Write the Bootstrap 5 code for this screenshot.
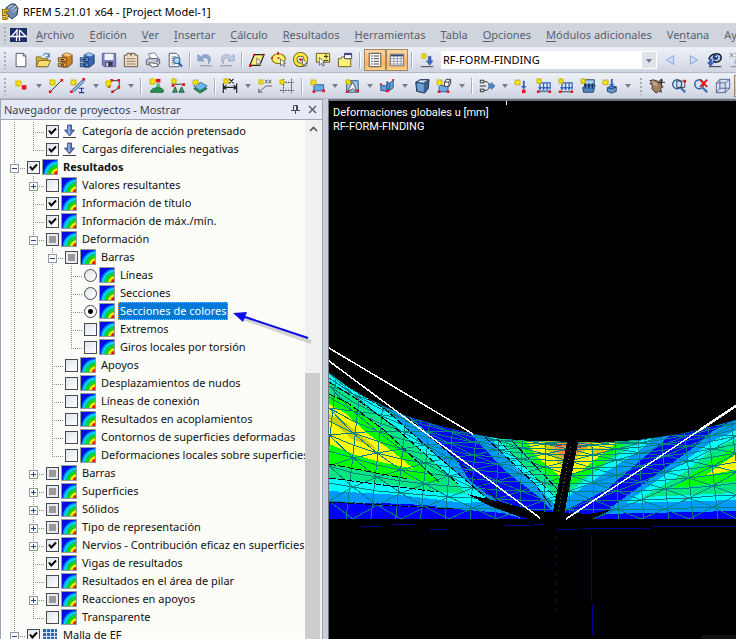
<!DOCTYPE html>
<html lang="es">
<head>
<meta charset="utf-8">
<meta name="viewport" content="width=device-width, initial-scale=1">
<title>RFEM 5.21.01 x64 - [Project Model-1]</title>
<link rel="stylesheet" href="https://cdn.jsdelivr.net/npm/bootstrap@5.3.0/dist/css/bootstrap.min.css">
<style>
body{font-family:"Noto Sans","Open Sans",sans-serif;font-size:11px;line-height:18px;color:#111;background:#fff}
button{font:inherit}
.titlebar{height:23px;font-size:11px;padding-left:2px;color:#000}
.menubar{height:24px;background:#d0d4dd;padding-left:4px;white-space:nowrap}
.menubar a{color:#5a6070;text-decoration:none;line-height:24px}
.menubar u{text-underline-offset:2px}
.menus{gap:15px;margin-left:9px;font-size:11px}
.toolstrip{height:26px;background:linear-gradient(#eef0f7,#dde1ec 60%,#cfd4e2);border-top:1px solid #e9ebf2;border-bottom:1px solid #b4b9c6;padding-left:4px;white-space:nowrap}
.grip{flex:none;width:6px;height:18px;background:radial-gradient(circle at 1px 1px,#a7adba 1px,transparent 1px) 0 1px/4px 4px repeat-y}
.grip-mid{width:12px;background-position:6px 1px}
.tool{flex:none;width:22px;height:22px;padding:0;border:1px solid transparent;background:none;display:flex;align-items:center;justify-content:center}
.tool svg{width:16px;height:16px}
.tool.on{background:linear-gradient(#fdd9a4,#fbb35b 70%,#fdd48e);border-color:#a08862}
.drop{flex:none;width:13px;height:22px;padding:0;border:0;background:none;display:flex;align-items:center;justify-content:center}
.drop::after{content:"";border:3px solid transparent;border-top:4px solid #777e8c;border-bottom:0}
.split{flex:none;width:8px;height:16px;background:linear-gradient(#a9aebb,#a9aebb) 3px 0/1px 100% no-repeat,linear-gradient(#fff,#fff) 4px 0/1px 100% no-repeat}
.casebox{flex:none;width:216px;height:18px;margin:0 3px;padding:0 2px;border:0;border-radius:0;color:#000;font-size:11px;line-height:18px;appearance:none;
 background:linear-gradient(#dfe2e9,#dfe2e9) right 1px center/14px 16px no-repeat #fff}
.casewrap{position:relative;flex:none}
.casewrap::after{content:"";position:absolute;right:8px;top:8px;border:3px solid transparent;border-top:4px solid #777e8c;border-bottom:0;pointer-events:none}
.workspace{min-height:0;background:#c9cedb}
.navpane{flex:none;width:323px;border:1px solid #9ea5b5;border-width:1px 1px 0 1px;background:#fcfcf8;margin-right:5px;position:relative;min-height:0}
.navhead{height:20px;background:#e6eaf6;border-bottom:1px solid #a0a6b4;color:#3c4350;padding:0 1px 0 3px}
.navhead button{border:0;background:none;padding:0;width:17px;height:18px;display:flex;align-items:center;justify-content:center}
.treebox{min-height:0;overflow:hidden;padding:2px 0 0 4px}
.treebox ul{list-style:none;margin:0;padding:0}
.treebox ul ul{margin-left:19px}
.treebox li{background:repeating-linear-gradient(#8a8a8a 0 1px,transparent 1px 2px) 9px 0/1px 100% no-repeat,repeating-linear-gradient(90deg,#8a8a8a 0 1px,transparent 1px 2px) 9px 10px/11px 1px no-repeat}
.treebox li.end{background-size:1px 10px,11px 1px}
.treebox li.through{background-size:1px 100%,0 0}
.node{height:18px;display:flex;align-items:center;white-space:nowrap}
.node::before{content:"";flex:none;width:22px}
.node:has(.fold)::before{display:none}
.fold{flex:none;width:9px;height:9px;margin:2px 8px 0 5px;padding:0;border:1px solid #8f98a8;background:linear-gradient(#27428c,#27428c) center/5px 1px no-repeat,#fff}
.fold.plus{background:linear-gradient(#27428c,#27428c) center/5px 1px no-repeat,linear-gradient(#27428c,#27428c) center/1px 5px no-repeat,#fff}
.node label{display:flex;align-items:center;height:18px}
.node input{appearance:none;flex:none;width:13px;height:13px;margin:0 2px 0 0;border:1px solid #454b55;background:linear-gradient(135deg,#dfe3ea,#fff)}
.node input[type=checkbox]:checked{background:url("data:image/svg+xml,%3Csvg xmlns='http://www.w3.org/2000/svg' viewBox='0 0 11 11'%3E%3Cpath d='M2 4.5 4.3 7.5 9 2.5' fill='none' stroke='%23000' stroke-width='2'/%3E%3C/svg%3E") center/11px no-repeat,linear-gradient(135deg,#dfe3ea,#fff)}
.node input.partial{background:linear-gradient(#999,#999) center/7px 7px no-repeat,#e9ebf0}
.node input[type=radio]{border-radius:50%}
.node input[type=radio]:checked{background:radial-gradient(circle,#000 2px,#fff 3px)}
.node svg{flex:none;width:16px;height:16px;margin-right:3px}
.node span{padding:0 2px}
.picked{background:#0078d7;color:#fff;outline:1px dotted #ff9a3d;outline-offset:-1px}
.scroller{flex:none;width:17px;background:#f0f0f0}
.scroller button{border:0;background:none;padding:0;height:18px;line-height:0}
.scroll-gap{flex:47}
.thumb{flex:53;background:#cdcdcd;width:15px}
.pointer{position:absolute;left:228px;top:207px;width:92px;height:40px;overflow:visible;pointer-events:none}
.scene{background:#000;border:1px solid #6e737d;border-width:2px 0 0 1px;position:relative;min-width:0;overflow:hidden}
.scene svg{position:absolute;inset:0;width:100%;height:100%}
.caption{position:relative;padding:5px 4px;color:#fff;font:11px/14px Roboto,Arial,sans-serif}
</style>
<script src="https://cdn.jsdelivr.net/npm/bootstrap@5.3.0/dist/js/bootstrap.bundle.min.js"></script>
</head>
<body class="vh-100 d-flex flex-column overflow-hidden">
<svg class="d-none">
 <defs>
 <symbol id="star" viewBox="0 0 8 8"><path d="M4 0v8M0 4h8M1 1l6 6M7 1 1 7" stroke="#b5a100" stroke-width="1.6"/><path d="M4 .5v7M.5 4h7M1.5 1.5l5 5M6.500 1.500l-5 5" stroke="#fff200" stroke-width="1"/></symbol>
 <symbol id="rainbow" viewBox="0 0 16 16"><path fill="#9a9a9a" d="M0 0h16v16H0z"/><svg x="1" y="1" width="14" height="14" viewBox="0 0 14 14"><path fill="#0010e0" d="M0 0h14v14H0z"/><circle cx="15" cy="15" r="14.500" fill="#0080ff"/><circle cx="15" cy="15" r="13" fill="#00d8f0"/><circle cx="15" cy="15" r="11" fill="#00a890"/><circle cx="15" cy="15" r="10.300" fill="#10d820"/><circle cx="15" cy="15" r="7.500" fill="#20a010"/><circle cx="15" cy="15" r="7" fill="#f8f000"/><circle cx="15" cy="15" r="4.800" fill="#ff9000"/><circle cx="15" cy="15" r="4" fill="#e81010"/></svg></symbol>
 <symbol id="load" viewBox="0 0 16 16"><path d="M6.500 2h4v5h3l-5 6-5-6h3z" fill="#5d78c0" stroke="#34477f" stroke-width=".8"/><path d="M8 3v8" stroke="#b9caf2" stroke-width="1.200"/><path d="M2 14.500h13" stroke="#444"/></symbol>
 <symbol id="meshfe" viewBox="0 0 16 16"><path fill="#2f63b8" d="M1 2h14v14H1z"/><path d="M4.500 2v14M8.500 2v14M12.500 2v14M1 5.500h14M1 9.500h14M1 13.500h14" stroke="#cfe3ff"/></symbol>
 <symbol id="arrow" viewBox="0 0 10 14"><path d="M1 1v11l3-3 2 4 2-1-2-4h3z" fill="#fff" stroke="#333"/></symbol>
 </defs>
</svg>

<header class="titlebar d-flex align-items-center flex-shrink-0">
 <svg width="17" height="17" viewBox="0 0 17 17" class="me-1"><path d="M4 5 9 1h4l3 4-1 7-5 4-6-5z" fill="#6f89ad" stroke="#2d3d58"/><path d="M6 5 11 2M9 7l5-4M11 9l4-3" stroke="#c9d6ea"/><path d="M6.500 7.500h-5v4c4-1.500 5 3.500 2 4-1.500.2-2.500-.2-3-1" fill="none" stroke="#5a4408" stroke-width="3"/><path d="M6.500 7.500h-5v4c4-1.500 5 3.500 2 4-1.500.2-2.500-.2-3-1" fill="none" stroke="#f0b71e" stroke-width="1.800"/></svg>
 <span>RFEM 5.21.01 x64 - [Project Model-1]</span>
</header>

<nav class="menubar d-flex align-items-center flex-shrink-0 overflow-hidden">
 <span class="grip"></span>
 <svg class="flex-shrink-0" width="17" height="14" viewBox="0 0 17 14"><path fill="#1d2c6b" d="M0 0h17v14H0z"/><path d="M0 8.500h17M2 8l5-6v6M9.500 2v11M9.500 2l6 6M6.500 8v5" stroke="#fff" fill="none" stroke-width="1.300"/></svg>
 <div class="menus d-flex">
 <a href="#"><u>A</u>rchivo</a><a href="#"><u>E</u>dición</a><a href="#"><u>V</u>er</a><a href="#"><u>I</u>nsertar</a><a href="#"><u>C</u>álculo</a><a href="#"><u>R</u>esultados</a><a href="#"><u>H</u>erramientas</a><a href="#"><u>T</u>abla</a><a href="#"><u>O</u>pciones</a><a href="#"><u>M</u>ódulos adicionales</a><a href="#">Ve<u>n</u>tana</a><a href="#">Ay<u>u</u>da</a>
 </div>
</nav>

<div class="toolstrip d-flex align-items-center flex-shrink-0 overflow-hidden" role="toolbar" aria-label="Estándar">
 <span class="grip"></span>
 <button class="tool" aria-label="Nuevo"><svg viewBox="0 0 18 18"><path d="M3.500 1.500h8l3 3v12h-11z" fill="#fff" stroke="#4a4f58"/><path d="M11.500 1.500v3h3" fill="none" stroke="#4a4f58"/></svg></button>
 <button class="tool" aria-label="Abrir"><svg viewBox="0 0 18 18"><path d="M1.500 5.500h5l1 2h7v9h-13z" fill="#d8b640" stroke="#7b6414"/><path d="m1.500 16.500 3-7h13l-3 7z" fill="#f7dc76" stroke="#7b6414"/><path d="M9 4c2-4 6-3 7 1M16 1v4.500h-4" fill="none" stroke="#4d7fb5" stroke-width="1.300"/></svg></button>
 <button class="tool" aria-label="Modelos"><svg viewBox="0 0 18 18"><path d="m6 3 5-2 6 2v10l-5 4H6z" fill="#c98526" stroke="#6d420c"/><path d="m6 3 6 2 5-2-6-2z" fill="#f4cd84"/><path d="M1.500 6.500h9v4h-9zM1.500 12.500h9v4h-9z" fill="#efb257" stroke="#6d420c"/><path d="M4 8.500h4M4 14.500h4" stroke="#333" stroke-width="1.500"/></svg></button>
 <button class="tool" aria-label="Proyectos"><svg viewBox="0 0 18 18"><path d="m6 3 5-2 6 2v10l-5 4H6z" fill="#3568b2" stroke="#1d3767"/><path d="m6 3 6 2 5-2-6-2z" fill="#a7c8ef"/><path d="M1.500 6.500h9v4h-9zM1.500 12.500h9v4h-9z" fill="#6a9edc" stroke="#1d3767"/><path d="M4 8.500h4M4 14.500h4" stroke="#123" stroke-width="1.500"/></svg></button>
 <button class="tool" aria-label="Guardar"><svg viewBox="0 0 18 18"><path d="M1.500 1.500h15v15h-13l-2-2z" fill="#8081c4" stroke="#55568f"/><path d="M4 2h10v7H4z" fill="#f3f3fb"/><path d="M5 11h8v5H5z" fill="#333a4c"/><path d="M6 12h2v4H6z" fill="#eee"/></svg></button>
 <button class="tool" aria-label="Informe"><svg viewBox="0 0 18 18"><path d="M1.500 3.500h3v-2h4v2h1v-2h4v2h3v13h-15z" fill="#ecdcc6" stroke="#5d4a35"/><path d="M4 7.500h10M4 10.500h10M4 13.500h10" stroke="#8f7759"/></svg></button>
 <button class="tool" aria-label="Imprimir"><svg viewBox="0 0 18 18"><path d="m4 2 7-1 4 6-8 2z" fill="#fff" stroke="#777"/><path d="m1.500 9 4-2 11 1v5l-5 3-10-2z" fill="#c5cad6" stroke="#525966"/><path d="m4 12 9 1 2 3-7 1z" fill="#fff" stroke="#555"/><circle cx="14" cy="10" r="1" fill="#3568d2"/></svg></button>
 <button class="tool" aria-label="Vista previa"><svg viewBox="0 0 18 18"><path d="M2.500 1.500h8l3 3v12h-11z" fill="#fff" stroke="#4a4f58"/><path d="M5 5.500h5M5 7.500h3M5 9.500h2M5 11.500h2M5 13.500h4" stroke="#777"/><circle cx="11" cy="9.500" r="3.500" fill="#aee0f8" stroke="#3a73b0" stroke-width="1.400"/><path d="m13.500 12.500 3.500 4" stroke="#24569a" stroke-width="2.200"/></svg></button>
 <span class="split"></span>
 <button class="tool" aria-label="Deshacer"><svg viewBox="0 0 18 18"><path d="M1 3v7h7L5.700 7.700C9 5 14 6.500 13 13c4.500-5 1.500-10.500-4-10-2.200.2-3.700 1.200-4.900 2.500z" fill="#8fa9cf" stroke="#6c83aa" stroke-width=".7"/><path d="M3 15.500h14" stroke="#888"/></svg></button>
 <button class="tool" aria-label="Rehacer"><svg viewBox="0 0 18 18"><path d="M17 3v7h-7l2.300-2.300C9 5 4 6.500 5 13 .5 8 3.500 2.500 9 3c2.200.2 3.700 1.200 4.900 2.500z" fill="#c3d0e4" stroke="#7b8ead" stroke-width=".7"/><path d="M1 15.500h14" stroke="#888"/></svg></button>
 <span class="split"></span>
 <button class="tool" aria-label="Selección romboide"><svg viewBox="0 0 18 18"><path d="M6 3h11l-5 12H1z" fill="#fdf07a" stroke="#222" stroke-width="1.300"/><path fill="#e01010" d="M5 2h2v2H5zM15 2h2v2h-2zM0 14h3v3H0z"/><use href="#arrow" x="8" y="6" width="7" height="10"/></svg></button>
 <button class="tool" aria-label="Selección elíptica"><svg viewBox="0 0 18 18"><ellipse cx="8.500" cy="7.500" rx="7.500" ry="5.500" fill="#fdf07a" stroke="#8f7500" stroke-width="1.300"/><path fill="#e01010" d="M0 6h2v2H0zM7 0h2v3H7zM7.500 6h2v2h-2z"/><use href="#arrow" x="10" y="7" width="7" height="10"/></svg></button>
 <button class="tool" aria-label="Selección anular"><svg viewBox="0 0 18 18"><circle cx="8.500" cy="8.500" r="6" fill="none" stroke="#5d4d00" stroke-width="5"/><circle cx="8.500" cy="8.500" r="6" fill="none" stroke="#fbe93d" stroke-width="3.300"/><circle cx="8.500" cy="8.500" r="1.500" fill="#e01010"/><use href="#arrow" x="10" y="7" width="7" height="10"/></svg></button>
 <button class="tool" aria-label="Selección especial"><svg viewBox="0 0 18 18"><path d="M1.500 1.500h15v10h-15z" fill="#fdf07a" stroke="#4f4a22"/><path d="M10 5h5M12.500 2.500v5M10 9.500h5" stroke="#222"/><use href="#arrow" x="4" y="5" width="8" height="12"/></svg></button>
 <button class="tool" aria-label="Nueva ventana"><svg viewBox="0 0 18 18"><path d="M1.500 7.500h3l1-2h4l1 2h5v9h-14z" fill="#fdf07a" stroke="#5f5522"/><path d="M8.500 1.500h8v6h-8z" fill="#fff" stroke="#353c6c"/><path d="M8.500 2.500h8" stroke="#353c8c" stroke-width="2"/></svg></button>
 <span class="split"></span>
 <button class="tool on" aria-label="Navegador"><svg viewBox="0 0 18 18"><path d="M2.500 1.500h13v15h-13z" fill="#fff" stroke="#393d44"/><path d="M4.500 4.500h2M4.500 7.500h2M4.500 10.500h2M4.500 13.500h2M7.500 4.500h6M7.500 7.500h6M7.500 10.500h6M7.500 13.500h6" stroke="#333"/></svg></button>
 <button class="tool on" aria-label="Tablas"><svg viewBox="0 0 18 18"><path d="M1.500 2.500h15v13h-15z" fill="#fff" stroke="#596481"/><path d="M2 4h14" stroke="#35466f" stroke-width="2"/><path d="M2 7.500h14M2 10.500h14M2 13.500h14M5.500 5v10M9.500 5v10M13.500 5v10" stroke="#8b93a4"/></svg></button>
 <span class="split"></span>
 <button class="tool" aria-label="Nuevo caso de carga"><svg viewBox="0 0 18 18"><use href="#star" x="2" y="1" width="7" height="7"/><path d="M10.500 5h3v5h2l-3.500 5-3.500-5h2z" fill="#3d68c8" stroke="#213f85" stroke-width=".6"/><path d="M2 16.500h14" stroke="#333"/></svg></button>
 <div class="casewrap"><select class="casebox" aria-label="Caso de carga"><option>RF-FORM-FINDING</option></select></div>
 <button class="tool" aria-label="Anterior"><svg viewBox="0 0 18 18"><path d="m4 9 8-5v10z" fill="#c8ddfa" stroke="#7f9fd2"/></svg></button>
 <button class="tool" aria-label="Siguiente"><svg viewBox="0 0 18 18"><path d="M14 9 6 4v10z" fill="#c8ddfa" stroke="#7f9fd2"/></svg></button>
 <button class="tool" aria-label="Mostrar cargas"><svg viewBox="0 0 18 18"><path d="M2 8c2-7 13-8 14-2 0 5-6 7-9 4" fill="#b9cdea" stroke="#18233c" stroke-width="1.700"/><circle cx="9.500" cy="6" r="3" fill="#1f3f80"/><circle cx="10.500" cy="5" r="1" fill="#fff"/><path d="M2.500 8h3v4h2L4 16 .5 12h2z" fill="#3d68c8" stroke="#213f85" stroke-width=".6"/><path d="M2 16.500h14" stroke="#222"/></svg></button>
 <button class="tool" aria-label="Valores"><svg viewBox="0 0 18 18"><path d="m1 1 4 5m0-5-4 5M7 1l4 5m0-5L7 6" stroke="#777"/><path d="M7 8h3v3h2l-3.500 4L5 11h2z" fill="#9db2d8"/><path d="M2 16.500h14" stroke="#777"/></svg></button>
</div>

<div class="toolstrip d-flex align-items-center flex-shrink-0 overflow-hidden" role="toolbar" aria-label="Insertar">
 <span class="grip"></span>
 <button class="tool" aria-label="Nudo"><svg viewBox="0 0 18 18"><use href="#star" x="2" y="2" width="8" height="8"/><path fill="#e01818" d="M10 8h5v5h-5z"/></svg></button>
 <button class="drop" aria-label="Más nudos"></button>
 <button class="tool" aria-label="Línea"><svg viewBox="0 0 18 18"><path d="M3 15 15 3" stroke="#222"/><path fill="#e01818" d="M1 14h3v3H1zM14 1h3v3h-3z"/><use href="#star" x="1" y="1" width="8" height="8"/></svg></button>
 <button class="tool" aria-label="Barra"><svg viewBox="0 0 18 18"><path d="M3 15 15 3" stroke="#456faa" stroke-width="3.500"/><path d="M3 15 15 3" stroke="#bcd8f8" stroke-width="1.300"/><path fill="#e01818" d="M0 14h3v3H0zM14 0h3v3h-3z"/><use href="#star" x="0" y="1" width="8" height="8"/><path d="M10 11.500h6M10 16.500h6M13 11v6" stroke="#203f8f" stroke-width="1.300"/></svg></button>
 <button class="drop" aria-label="Más barras"></button>
 <button class="tool" aria-label="Polilínea"><svg viewBox="0 0 18 18"><path d="M7 3h9v8l-7 4" fill="none" stroke="#222"/><path fill="#e01818" d="M6 1h3v3H6zM14 1h3v3h-3zM14 9h3v3h-3zM7 14h3v3H7zM3 8h3v3H3z"/><use href="#star" x="0" y="2" width="8" height="8"/></svg></button>
 <button class="drop" aria-label="Más líneas"></button>
 <span class="split"></span>
 <button class="tool" aria-label="Apoyo"><svg viewBox="0 0 18 18"><use href="#star" x="1" y="0" width="8" height="8"/><path fill="#e01818" d="M9 1h5v4H9z"/><path d="M10 6h3l1 5H9z" fill="#56b879"/><path d="M3 16c0-3 3-5 8-5s7 2 6 5z" fill="#28934f" stroke="#165a30"/></svg></button>
 <button class="tool" aria-label="Apoyo lineal"><svg viewBox="0 0 18 18"><path d="M2 7h14" stroke="#222"/><path fill="#e01818" d="M2 7h3v3H2zM14 6h3v3h-3z"/><use href="#star" x="1" y="0" width="7" height="7"/><path d="m6 10-3 6h5zM13 10l-3 6h6z" fill="#35a460" stroke="#165a30"/></svg></button>
 <button class="tool" aria-label="Apoyo superficial"><svg viewBox="0 0 18 18"><path d="m2 12 8-5 7 5-8 5z" fill="#28934f" stroke="#165a30"/><path d="m2 9 8-4 7 4-8 5z" fill="#6db6f0" stroke="#2b6fae"/><use href="#star" x="0" y="1" width="8" height="8"/></svg></button>
 <span class="split"></span>
 <button class="tool" aria-label="Cota"><svg viewBox="0 0 18 18"><path d="M1.500 6v11M16.500 6v11M2 10.500h14M5 8l-3 2.500L5 13M13 8l3 2.500-3 2.500M8 1l5 5m0-5L8 6" fill="none" stroke="#222" stroke-width="1.300"/><use href="#star" x="1" y="0" width="7" height="7"/></svg></button>
 <button class="drop" aria-label="Más cotas"></button>
 <button class="tool" aria-label="Comentario"><svg viewBox="0 0 18 18"><path d="M2 16 10 9h7M2 12v4h4M9 2l3 4m0-4L9 6M13 2l3 4m0-4-3 4" fill="none" stroke="#555"/><use href="#star" x="1" y="1" width="7" height="7"/></svg></button>
 <button class="tool" aria-label="Rejilla"><svg viewBox="0 0 18 18"><path d="M1 5h16M1 14h16M5 1v16M14 1v16" stroke="#333" stroke-dasharray="2 1"/><use href="#star" x="0" y="1" width="7" height="7"/></svg></button>
 <span class="split"></span>
 <button class="tool" aria-label="Superficie"><svg viewBox="0 0 18 18"><path d="M5.500 7.500h11v7h-11z" fill="#68aae2" stroke="#285a91"/><path fill="#e01818" d="M4 14h3v3H4zM15 13h3v3h-3z"/><use href="#star" x="1" y="1" width="8" height="8"/></svg></button>
 <button class="drop" aria-label="Más superficies"></button>
 <button class="tool" aria-label="Superficie curva"><svg viewBox="0 0 18 18"><path d="M3 3h13v13H3z" fill="#9bc4e8" stroke="#305078"/><path d="M5 15c0-4 4-6 4-11l3 5 2 6-4-3z" fill="#fff" stroke="#444"/><path fill="#e01818" d="M2 14h3v3H2zM14 13h3v3h-3z"/><use href="#star" x="1" y="1" width="7" height="7"/></svg></button>
 <button class="drop" aria-label="Más curvas"></button>
 <button class="tool" aria-label="Superficie alabeada"><svg viewBox="0 0 18 18"><path d="m2 8 7 1V4l3 2 4-4v9l-4 3-3-2v3l-7-1z" fill="#5c9fe0" stroke="#28527f"/><path d="M9 5v8M12 6v8" stroke="#28527f"/><path fill="#e01818" d="M1 6h2v2H1zM8 13h3v3H8zM15 1h2v2h-2z"/></svg></button>
 <button class="drop" aria-label="Más alabeadas"></button>
 <button class="tool" aria-label="Sólido"><svg viewBox="0 0 18 18"><path d="m2 5 5-3h10l-1 10-4 5-9-2z" fill="#3a6295" stroke="#172f50"/><path d="m2 5 9 1 6-4H7z" fill="#bfd9f5" stroke="#172f50"/><path d="m3 6 8 1v9l-7-2z" fill="#6e9fd4"/></svg></button>
 <button class="tool" aria-label="Sólido de superficies"><svg viewBox="0 0 18 18"><path d="M3.500 8.500h10v7h-10z" fill="#68aae2" stroke="#285a91"/><path d="M9.500 4.500h5v5h-5zM9.500 4.500l2-3h5v5l-2 3M14.500 4.500l2-3" fill="#eee" stroke="#333"/><path fill="#e01818" d="M2 14h3v3H2zM12 14h3v3h-3z"/><use href="#star" x="0" y="1" width="8" height="8"/></svg></button>
 <button class="drop" aria-label="Más sólidos"></button>
 <span class="split"></span>
 <button class="tool" aria-label="Conjunto"><svg viewBox="0 0 18 18"><path d="M1.500 2.500h4v3h-4zM1.500 12.500h4v3h-4zM6 4c3 0 5 1 6 4M6 14c3 0 5-1 6-4M1 9h7" fill="none" stroke="#222"/><path d="M11 7h3V5l4 4-4 4v-2h-3z" fill="#4c8ad0" stroke="#244b80" stroke-width=".6"/></svg></button>
 <button class="drop" aria-label="Más conjuntos"></button>
 <button class="tool" aria-label="Carga nodal"><svg viewBox="0 0 18 18"><use href="#star" x="0" y="1" width="8" height="8"/><path d="M10 3h2v6h2l-3 4-3-4h2z" fill="#315fc0"/><path fill="#e01818" d="M9 13h4v4H9z"/></svg></button>
 <button class="tool" aria-label="Carga en barra"><svg viewBox="0 0 18 18"><path d="M4 5.500h12v6M4.500 5v7M8.500 5v7M12.500 5v7M3 10l1.500 3L6 10M7 10l1.500 3 1.500-3M11 10l1.500 3 1.500-3M15 10l1 3" fill="none" stroke="#315fc0" stroke-width="1.300"/><path d="M2 15h14" stroke="#5585b8" stroke-width="2"/><path fill="#e01818" d="M1 14h3v3H1zM14 14h3v3h-3z"/><use href="#star" x="0" y="0" width="7" height="7"/></svg></button>
 <button class="tool" aria-label="Carga lineal"><svg viewBox="0 0 18 18"><path d="M4 5.500h12v6M4.500 5v7M8.500 5v7M12.500 5v7M3 10l1.500 3L6 10M7 10l1.500 3 1.500-3M11 10l1.500 3 1.500-3M15 10l1 3" fill="none" stroke="#315fc0" stroke-width="1.300"/><path d="M2 15.500h14" stroke="#333"/><path fill="#e01818" d="M1 14h3v3H1zM14 14h3v3h-3z"/><use href="#star" x="0" y="0" width="7" height="7"/></svg></button>
 <button class="tool" aria-label="Carga superficial"><svg viewBox="0 0 18 18"><path d="M5 2h11v6H5z" fill="#a8cdf0" stroke="#1f3560"/><path d="m3 11 3-3h11l-2 8H4z" fill="#4d89c9" stroke="#1f3560"/><path d="M6 6v6M10 6v6M14 6v6" stroke="#17305e" stroke-width="1.600"/><use href="#star" x="0" y="0" width="7" height="7"/></svg></button>
 <button class="tool" aria-label="Carga en sólido"><svg viewBox="0 0 18 18"><path d="m6 11 4-2 6 1v5l-5 2-5-2z" fill="#5d97d8" stroke="#1f3560"/><path d="m6 11 5 1 5-2" fill="none" stroke="#1f3560"/><path d="M10 1h2v6h2l-3 3-3-3h2z" fill="#315fc0"/><use href="#star" x="0" y="1" width="8" height="8"/></svg></button>
 <button class="drop" aria-label="Más cargas"></button>
 <span class="grip grip-mid"></span>
 <button class="tool" aria-label="Mover vista"><svg viewBox="0 0 18 18"><path d="m1 3 4-1 6 2 3-3 1 2-2 4 3 3-3 1 1 5-3-1-3 2-5-5 1-3-3-3 3 0z" fill="#a08063" stroke="#3e3023"/><path d="m3 4 6 3M4 6l5 3" stroke="#dec5a6"/><path d="M14 1v8M10 5h8" stroke="#222"/></svg></button>
 <button class="tool" aria-label="Zoom ventana"><svg viewBox="0 0 18 18"><circle cx="7" cy="7" r="5" fill="#c9e6fb" stroke="#2d5c9e" stroke-width="1.600"/><path d="m11 11 5 5" stroke="#3b6fb5" stroke-width="2.500"/><path d="M6.500 3.500h9v7h-9z" fill="none" stroke="#333"/><path fill="#e01818" d="M14 2h3v3h-3z"/></svg></button>
 <button class="tool" aria-label="Zoom todo"><svg viewBox="0 0 18 18"><circle cx="7" cy="7" r="5" fill="#c9e6fb" stroke="#2d5c9e" stroke-width="1.600"/><path d="m11 11 5 5" stroke="#3b6fb5" stroke-width="2.500"/><path d="m8 2 8 8m0-8-8 8" stroke="#e01818" stroke-width="2.200"/></svg></button>
 <button class="tool" aria-label="Isometría"><svg viewBox="0 0 18 18"><path d="M1.500 5.500h10v11h-10zM5.500 1.500h11v10h-11zM1.500 5.500l4-4M11.500 5.500l5-4M1.500 16.500l4-5M11.500 16.500l5-5" fill="#c9def4" fill-opacity=".5" stroke="#4c5f87"/></svg></button>
 <button class="tool on" aria-label="Modelo sólido"></button>
</div>

<main class="workspace d-flex flex-fill">
 <aside class="navpane d-flex flex-column">
 <div class="navhead d-flex align-items-center flex-shrink-0">
 <span class="me-auto">Navegador de proyectos - Mostrar</span>
 <button aria-label="Fijar"><svg width="9" height="9" viewBox="0 0 9 9"><path d="M2.500.5h4v5h-4zM5.500 1v4M0 5.500h9M4.500 6v3" fill="none" stroke="#444b58"/></svg></button>
 <button aria-label="Cerrar"><svg width="9" height="9" viewBox="0 0 9 9"><path d="m1 1 7 7m0-7L1 8" stroke="#555b66" stroke-width="1.300"/></svg></button>
 </div>
 <div class="d-flex flex-fill overflow-hidden">
 <div class="treebox flex-fill">
 <ul>
 <li class="through">
 <ul>
 <li><div class="node"><label><input type="checkbox" checked><svg><use href="#load"/></svg><span>Categoría de acción pretensado</span></label></div></li>
 <li class="end"><div class="node"><label><input type="checkbox" checked><svg><use href="#load"/></svg><span>Cargas diferenciales negativas</span></label></div></li>
 </ul>
 </li>
 <li><div class="node"><button class="fold" aria-label="Contraer"></button><label><input type="checkbox" checked><svg><use href="#rainbow"/></svg><span class="fw-bold">Resultados</span></label></div>
 <ul>
 <li><div class="node"><button class="fold plus" aria-label="Expandir"></button><label><input type="checkbox"><svg><use href="#rainbow"/></svg><span>Valores resultantes</span></label></div></li>
 <li><div class="node"><label><input type="checkbox" checked><svg><use href="#rainbow"/></svg><span>Información de título</span></label></div></li>
 <li><div class="node"><label><input type="checkbox" checked><svg><use href="#rainbow"/></svg><span>Información de máx./mín.</span></label></div></li>
 <li><div class="node"><button class="fold" aria-label="Contraer"></button><label><input type="checkbox" class="partial"><svg><use href="#rainbow"/></svg><span>Deformación</span></label></div>
 <ul>
 <li><div class="node"><button class="fold" aria-label="Contraer"></button><label><input type="checkbox" class="partial"><svg><use href="#rainbow"/></svg><span>Barras</span></label></div>
 <ul>
 <li><div class="node"><label><input type="radio" name="barras"><svg><use href="#rainbow"/></svg><span>Líneas</span></label></div></li>
 <li><div class="node"><label><input type="radio" name="barras"><svg><use href="#rainbow"/></svg><span>Secciones</span></label></div></li>
 <li><div class="node"><label><input type="radio" name="barras" checked><svg><use href="#rainbow"/></svg><span class="picked">Secciones de colores</span></label></div></li>
 <li><div class="node"><label><input type="checkbox"><svg><use href="#rainbow"/></svg><span>Extremos</span></label></div></li>
 <li class="end"><div class="node"><label><input type="checkbox"><svg><use href="#rainbow"/></svg><span>Giros locales por torsión</span></label></div></li>
 </ul>
 </li>
 <li><div class="node"><label><input type="checkbox"><svg><use href="#rainbow"/></svg><span>Apoyos</span></label></div></li>
 <li><div class="node"><label><input type="checkbox"><svg><use href="#rainbow"/></svg><span>Desplazamientos de nudos</span></label></div></li>
 <li><div class="node"><label><input type="checkbox"><svg><use href="#rainbow"/></svg><span>Líneas de conexión</span></label></div></li>
 <li><div class="node"><label><input type="checkbox"><svg><use href="#rainbow"/></svg><span>Resultados en acoplamientos</span></label></div></li>
 <li><div class="node"><label><input type="checkbox"><svg><use href="#rainbow"/></svg><span>Contornos de superficies deformadas</span></label></div></li>
 <li class="end"><div class="node"><label><input type="checkbox"><svg><use href="#rainbow"/></svg><span>Deformaciones locales sobre superficies</span></label></div></li>
 </ul>
 </li>
 <li><div class="node"><button class="fold plus" aria-label="Expandir"></button><label><input type="checkbox" class="partial"><svg><use href="#rainbow"/></svg><span>Barras</span></label></div></li>
 <li><div class="node"><button class="fold plus" aria-label="Expandir"></button><label><input type="checkbox" class="partial"><svg><use href="#rainbow"/></svg><span>Superficies</span></label></div></li>
 <li><div class="node"><button class="fold plus" aria-label="Expandir"></button><label><input type="checkbox" class="partial"><svg><use href="#rainbow"/></svg><span>Sólidos</span></label></div></li>
 <li><div class="node"><button class="fold plus" aria-label="Expandir"></button><label><input type="checkbox" class="partial"><svg><use href="#rainbow"/></svg><span>Tipo de representación</span></label></div></li>
 <li><div class="node"><button class="fold plus" aria-label="Expandir"></button><label><input type="checkbox" checked><svg><use href="#rainbow"/></svg><span>Nervios - Contribución eficaz en superficies</span></label></div></li>
 <li><div class="node"><label><input type="checkbox" checked><svg><use href="#rainbow"/></svg><span>Vigas de resultados</span></label></div></li>
 <li><div class="node"><label><input type="checkbox"><svg><use href="#rainbow"/></svg><span>Resultados en el área de pilar</span></label></div></li>
 <li><div class="node"><button class="fold plus" aria-label="Expandir"></button><label><input type="checkbox" class="partial"><svg><use href="#rainbow"/></svg><span>Reacciones en apoyos</span></label></div></li>
 <li class="end"><div class="node"><label><input type="checkbox"><svg><use href="#rainbow"/></svg><span>Transparente</span></label></div></li>
 </ul>
 </li>
 <li><div class="node"><button class="fold" aria-label="Contraer"></button><label><input type="checkbox" checked><svg><use href="#meshfe"/></svg><span>Malla de EF</span></label></div></li>
 </ul>
 </div>
 <div class="scroller d-flex flex-column">
 <button aria-label="Subir"><svg width="9" height="6" viewBox="0 0 9 6"><path d="m1 5 3.500-3.500L8 5" fill="none" stroke="#555" stroke-width="1.700"/></svg></button>
 <div class="scroll-gap"></div>
 <div class="thumb"></div>
 </div>
 </div>
 <svg class="pointer" viewBox="0 0 92 40"><path d="M14 11 82 35" stroke="#999" stroke-opacity=".4" stroke-width="4"/><path d="m10 8 69 23" stroke="#0c0cf0" stroke-width="2"/><path d="m4 6 14-1-4 10z" fill="#0c0cf0"/></svg>
 </aside>

 <section class="scene flex-fill">
 <svg viewBox="329 100 407 539" preserveAspectRatio="xMinYMin slice" shape-rendering="crispEdges">
 <defs><clipPath id="skin"><path d="M329 372 345 384 365 396 385 406 406 415 440 425 473 433 500 438 526 440 562 441 600 442 640 439 680 433 706 427 736 419 760 412V518H329z"/></clipPath></defs>
 <g clip-path="url(#skin)">
 <path fill="#0000ff" d="M329 360h431v160H329z"/>
 <g id="west">
 <path fill="#0099ff" d="M329 360 408 414 455 457 470 480 503 505 520 517 503 512 455 508 425 504 380 502 329 501z"/>
 <path fill="#00ffff" d="M329 360 385 408 402 423 435 453 458 473 490 500 465 502 400 494 329 490z"/>
 <path fill="#00e680" d="M329 380 355 396 392 423 425 453 458 483 466 493 438 491 380 482 329 477z"/>
 <path fill="#00ff00" d="M329 392 348 402 385 430 412 458 440 482 408 478 368 471 329 463z"/>
 <path fill="#ffff00" d="M329 403 345 412 368 433 392 450 414 468 385 462 358 455 329 443z"/>
 <path fill="#cccc00" d="M329 413 345 421 378 449 352 438 329 418z"/>
 </g>
 <g id="centre">
 <path fill="#0099ff" d="M468 430 505 470 535 493 556 514 606 489 675 430z"/>
 <path fill="#00ffff" d="M485 430 512 463 535 483 557 506 566 497 603 473 636 452 660 432z"/>
 <path fill="#00e680" d="M495 434 522 463 543 483 559 499 593 473 642 437z"/>
 <path fill="#00ff00" d="M512 436 535 462 553 480 562 490 599 466 628 439z"/>
 <path fill="#ffff00" d="M525 438 536 455 562 477 582 469 619 440z"/>
 <path fill="#cccc00" d="M538 438 563 467 597 440zM588 446l22 2-15 7z"/>
 <path fill="#f09040" d="M546 438 566 461 594 440z"/>
 <path stroke="#f01818" stroke-width="2" d="M556 444h6M576 445h9M560 449h18M565 454h10"/>
 </g>
 <g id="east">
 <path fill="#0099ff" d="M760 405 713 430 693 447 643 483 609 508 600 513 736 510 760 510z"/>
 <path fill="#00ffff" d="M760 418 713 440 666 473 626 502 736 499 760 498z"/>
 <path fill="#00e680" d="M760 428 713 448 686 470 643 496 736 492 760 490z"/>
 <path fill="#00ff00" d="M760 432 713 458 673 487 736 480 760 476z"/>
 <path fill="#ffff00" d="M760 438 726 460 706 474 736 469 760 464z"/>
 </g>
 <g id="mesh" fill="none" stroke="#008080"></g>
 <path id="seams" fill="none" stroke="#000" d="M329 381 355 397 392 424 425 453 458 483M329 393 348 402 385 430 440 482M345 384 385 408 435 453 490 500M406 415 455 457 503 505M329 477 438 491M329 463 408 478M329 501 455 508M485 436 535 483 556 512M497 438 556 497M512 440 557 488" stroke-dasharray="7 2"/>
 </g>
 <path fill="#000" d="M467 493 500 501 535 510 590 513 613 508 590 519 540 520 520 516 490 505zM567 441h11l-15 79h-12z"/>
 <path stroke="#777700" stroke-dasharray="1 3" d="m571 446-13 66"/>
 <path stroke="#fff" fill="none" stroke-width="1.500" d="M329 347 473 433M329 360 540 517M566 518 736 405"/>
 <path stroke="#fff" stroke-width="2.500" d="m700 429 36-24"/>
 <path stroke="#fff" d="M506.500 100v4"/>
 <path stroke="#000090" fill="none" d="M360 525.500h20M392 523.500h22M430 528.500h18M505 524.500h26M533 523.500h11M556 528.500h21M582 527.500h68M651 525.500h85M591.500 534v66M592.500 604v30"/>
 <path stroke="#000080" stroke-dasharray="4 5" d="M555.500 535v80"/>
 <path fill="#111" d="M701 634h35v5h-35z"/>
 </svg>
 <div class="caption">Deformaciones globales u [mm]<br>RF-FORM-FINDING</div>
 </section>
</main>

<script>
// Finite-element mesh: rows follow the upper edge of the membrane and flatten towards the base.
const edge=[[329,372],[345,384],[365,396],[385,406],[406,415],[440,425],[473,433],[526,440],[600,442],[640,439],[680,433],[706,427],[740,418]];
const topAt=x=>{for(let i=1;i<edge.length;i++){const[a,b]=edge[i-1],[c,d]=edge[i];if(x<=c)return b+(d-b)*(x-a)/(c-a)}return 418};
const base=518,rows=11,step=24;
const at=(x,r)=>{const t=topAt(x);return Math.round(t+(base-t)*Math.pow(r/rows,1.4))};
let d='';
for(let r=0;r<=rows;r++){d+='M';for(let x=329;x<=761;x+=step)d+=x+' '+at(x,r)+' '}
for(let x=329;x<=761;x+=step){
 const lean=(560-x)/30;
 d+=`M${x+lean} ${at(x,0)}L${x-lean} ${base}`;
 for(let r=0;r<rows;r++){const up=(r+Math.round(x/step))%2;d+=`M${x} ${at(x,r+up)}L${x+step} ${at(x+step,r+1-up)}`}
}
const p=document.createElementNS('http://www.w3.org/2000/svg','path');
p.setAttribute('d',d);
document.getElementById('mesh').append(p);
</script>
</body>
</html>
